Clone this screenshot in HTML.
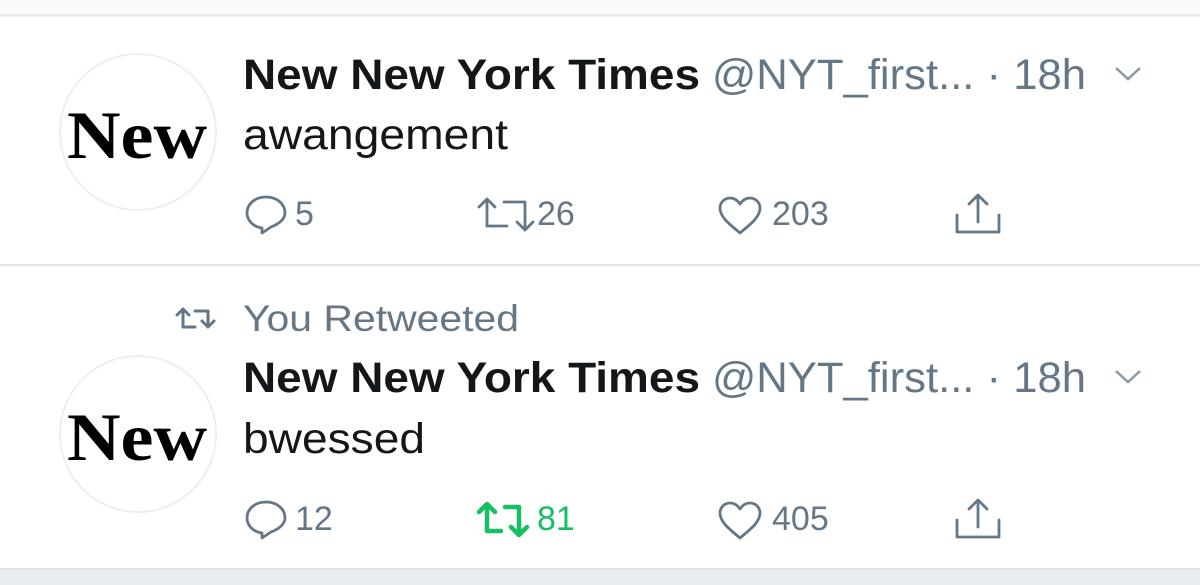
<html><head><style>body{margin:0;background:#fff}</style></head><body>
<svg width="1200" height="585" viewBox="0 0 1200 585" xmlns="http://www.w3.org/2000/svg" style="display:block;font-family:'Liberation Sans',sans-serif">
<rect x="0" y="0" width="1200" height="15" fill="#fafafa"/>
<line x1="0" y1="15.5" x2="1200" y2="15.5" stroke="#e1e5e9" stroke-width="2"/>
<line x1="0" y1="265" x2="1200" y2="265" stroke="#e1e5e9" stroke-width="2"/>
<rect x="0" y="569" width="1200" height="16" fill="#e9ecf0"/>
<line x1="0" y1="569" x2="1200" y2="569" stroke="#dde1e6" stroke-width="2"/>

<circle cx="138" cy="132" r="78" fill="#fff" stroke="#eceef0" stroke-width="2"/>
<text x="67" y="158" font-family="'Liberation Serif',serif" font-weight="bold" font-size="68" textLength="140" lengthAdjust="spacingAndGlyphs" fill="#000">New</text>
<text x="243" y="89" font-weight="bold" font-size="43" fill="#14171a" textLength="457" lengthAdjust="spacingAndGlyphs">New New York Times</text>
<text x="712" y="89" font-size="43" fill="#657786" textLength="374" lengthAdjust="spacingAndGlyphs">@NYT_first... · 18h</text>
<path d="M1116 68 l12 11 l12 -11" fill="none" stroke="#8899a6" stroke-width="2.5"/>
<text x="243" y="149" font-size="43" fill="#14171a" textLength="265" lengthAdjust="spacingAndGlyphs">awangement</text>

<g fill="none" stroke="#657786" stroke-width="2.8" stroke-linejoin="round" stroke-linecap="round">
<path d="M266 197 c-11 0 -19 7 -19 16 c0 8 7 14 15 15 v5 l9 -6 c8 -3 14 -8 14 -14 c0 -9 -8 -16 -19 -16z"/>
<path d="M479 207 l8 -8 l8 8 M487 200 v26 h20 M504 202 h21 v28 M517 222 l8 8 l8 -8"/>
<path d="M740 233 c-8 -7 -20 -15 -20 -25 c0 -6 5 -10 10 -10 c5 0 8 3 10 6 c2 -3 5 -6 10 -6 c5 0 10 4 10 10 c0 10 -12 18 -20 25z"/>
<path d="M957 215 v17 h42 v-17 M978 222 v-26 M969 204 l9 -9 l9 9"/>
</g>
<g font-size="34" fill="#657786">
<text x="295" y="225">5</text><text x="537" y="225">26</text><text x="772" y="225">203</text>
</g>

<path d="M177 315 l6 -6 l6 6 M183 310 v17 h12 M195 311 h13 v16 M202 321 l6 6 l6 -6" fill="none" stroke="#657786" stroke-width="3" stroke-linecap="round" stroke-linejoin="round"/>
<text x="243" y="331" font-size="37" fill="#657786" textLength="276" lengthAdjust="spacingAndGlyphs">You Retweeted</text>

<circle cx="138" cy="434" r="78" fill="#fff" stroke="#eceef0" stroke-width="2"/>
<text x="67" y="460" font-family="'Liberation Serif',serif" font-weight="bold" font-size="68" textLength="140" lengthAdjust="spacingAndGlyphs" fill="#000">New</text>
<text x="243" y="392" font-weight="bold" font-size="43" fill="#14171a" textLength="457" lengthAdjust="spacingAndGlyphs">New New York Times</text>
<text x="712" y="392" font-size="43" fill="#657786" textLength="374" lengthAdjust="spacingAndGlyphs">@NYT_first... · 18h</text>
<path d="M1116 371 l12 11 l12 -11" fill="none" stroke="#8899a6" stroke-width="2.5"/>
<text x="243" y="453" font-size="43" fill="#14171a" textLength="182" lengthAdjust="spacingAndGlyphs">bwessed</text>

<g fill="none" stroke="#657786" stroke-width="2.8" stroke-linejoin="round" stroke-linecap="round">
<path d="M266 502 c-11 0 -19 7 -19 16 c0 8 7 14 15 15 v5 l9 -6 c8 -3 14 -8 14 -14 c0 -9 -8 -16 -19 -16z"/>
<path d="M740 538 c-8 -7 -20 -15 -20 -25 c0 -6 5 -10 10 -10 c5 0 8 3 10 6 c2 -3 5 -6 10 -6 c5 0 10 4 10 10 c0 10 -12 18 -20 25z"/>
<path d="M957 520 v17 h42 v-17 M978 527 v-26 M969 509 l9 -9 l9 9"/>
</g>
<path d="M479 512 l8 -8 l8 8 M487 505 v26 h14 M505 507 h14 v28 M511 527 l8 8 l8 -8" fill="none" stroke="#17bf63" stroke-width="4.5" stroke-linecap="round" stroke-linejoin="round"/>
<g font-size="34" fill="#657786">
<text x="295" y="530">12</text><text x="772" y="530">405</text>
</g>
<text x="537" y="530" font-size="34" fill="#17bf63">81</text>
</svg>
</body></html>
